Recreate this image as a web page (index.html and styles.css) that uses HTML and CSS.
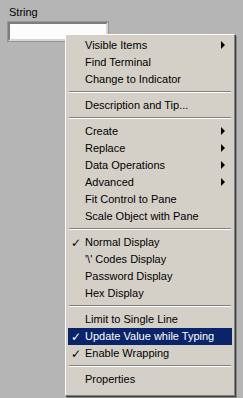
FILE: index.html
```html
<!DOCTYPE html>
<html lang="en">
<head>
    <meta charset="UTF-8">
    <title>String control menu</title>
    <link rel="stylesheet" href="styles.css">
</head>
<body>
    <div class="panel">
        <div class="control">
            <div class="label">String</div>
            <div class="string-box"></div>
        </div>

        <!-- shortcut menu for the string control -->
        <div class="menu">
            <div class="item sub">Visible Items</div>
            <div class="item">Find Terminal</div>
            <div class="item">Change to Indicator</div>
            <div class="sep"></div>
            <div class="item">Description and Tip...</div>
            <div class="sep"></div>
            <div class="item sub">Create</div>
            <div class="item sub">Replace</div>
            <div class="item sub">Data Operations</div>
            <div class="item sub">Advanced</div>
            <div class="item">Fit Control to Pane</div>
            <div class="item">Scale Object with Pane</div>
            <div class="sep"></div>
            <div class="item checked">Normal Display</div>
            <div class="item">'\' Codes Display</div>
            <div class="item">Password Display</div>
            <div class="item">Hex Display</div>
            <div class="sep"></div>
            <div class="item">Limit to Single Line</div>
            <div class="item checked active">Update Value while Typing</div>
            <div class="item checked">Enable Wrapping</div>
            <div class="sep"></div>
            <div class="item">Properties</div>
        </div>
    </div>
</body>
</html>
```

FILE: styles.css
```css
body {
    margin: 0;
    padding: 0;
    background-color: #b5b5b5;
    font-family: Tahoma, "Liberation Sans", Arial, sans-serif;
    font-size: 11px;
    color: #000;
}

.panel {
    position: relative;
    width: 243px;
    height: 398px;
    overflow: hidden;
}

.control {
    padding: 5px 0 0 8px;
}

.label {
    padding-left: 1px;
    height: 17px;
    line-height: 14px;
}

.string-box {
    width: 96px;
    height: 15px;
    background: #fcfcfc;
    border-top: 2px solid #7c7c7c;
    border-left: 2px solid #7c7c7c;
    border-bottom: 2px solid #d6d6d6;
    border-right: 2px solid #d6d6d6;
    box-shadow: 0 0 0 1px #969696;
}

.menu {
    position: absolute;
    left: 65px;
    top: 34px;
    width: 164px;
    padding: 2px 2px 7px 2px;
    background: #d4d0c8;
    border-top: 1px solid #fff;
    border-left: 1px solid #fff;
    border-right: 1px solid #808080;
    border-bottom: 1px solid #808080;
    box-shadow: 1px 1px 0 #404040, 2px 2px 0 rgba(0, 0, 0, 0.25), inset 1px 1px 0 #d4d0c8;
}

.item {
    position: relative;
    height: 17px;
    line-height: 17px;
    padding-left: 17px;
    white-space: nowrap;
}

.item.checked::before {
    content: "\2713";
    position: absolute;
    left: 3px;
    top: 1px;
    font-family: "DejaVu Sans", sans-serif;
    font-size: 12px;
}

.item.sub::after {
    content: "";
    position: absolute;
    right: 7px;
    top: 4px;
    border-top: 4px solid transparent;
    border-bottom: 4px solid transparent;
    border-left: 4px solid #000;
}

.item.active {
    background: #0a246a;
    color: #fff;
}

.sep {
    height: 1px;
    margin: 3px 1px 4px 1px;
    background: #808080;
    border-bottom: 1px solid #fff;
}
```
